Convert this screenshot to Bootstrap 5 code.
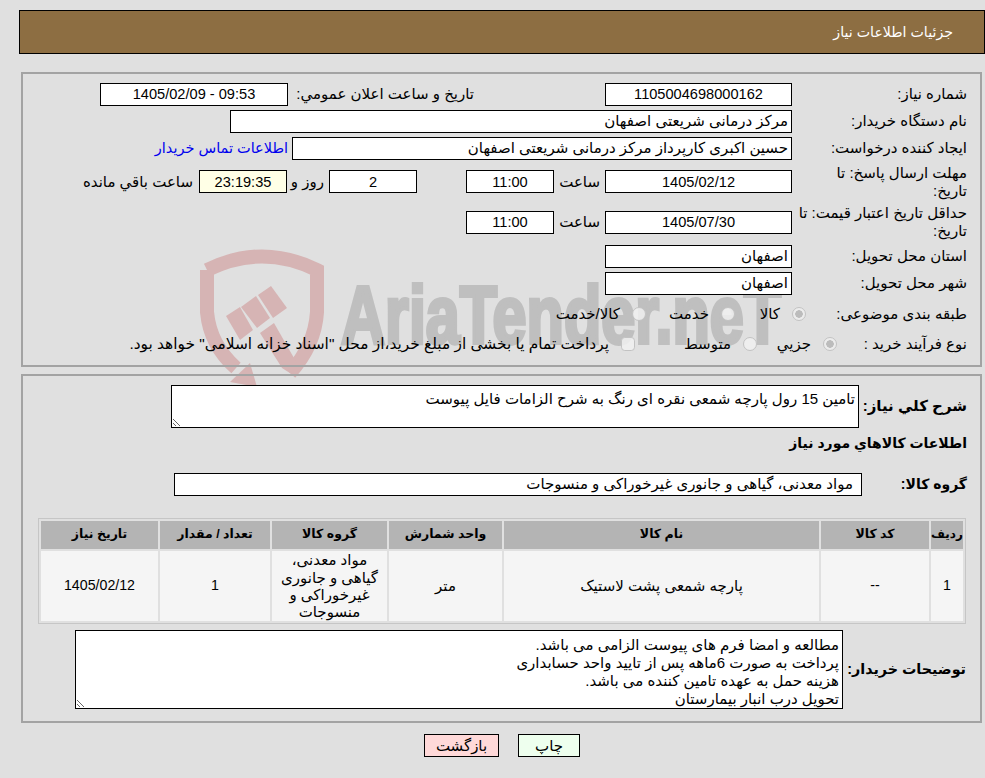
<!DOCTYPE html>
<html lang="fa" dir="rtl">

<head>
    <meta charset="UTF-8">
    <meta name="viewport" content="width=device-width, initial-scale=1.0">
    <title>جزئیات اطلاعات نیاز</title>
    <link href="https://cdn.jsdelivr.net/npm/bootstrap@5.3.0/dist/css/bootstrap.min.css" rel="stylesheet">
    <style>
        html, body { height: 778px; overflow: hidden; }
        body {
            position: relative;
            background-color: #e0e0e0;
            color: #000;
            font-family: "Liberation Sans", "DejaVu Sans", sans-serif;
            font-size: 15px;
            line-height: 18px;
            padding: 9.5px 0 0 0;
        }

        .watermark { position: absolute; left: 190px; top: 240px; width: 620px; height: 160px; z-index: 0; }
        .watermark text { font-family: "Liberation Sans", sans-serif; font-weight: 700; fill: #bfbfbf; stroke: #bfbfbf; stroke-width: 4; }
        .page { position: relative; z-index: 1; }

        .title-bar {
            height: 44px;
            margin-right: 0;
            margin-left: 19px;
            padding-right: 31px;
            background: #8d6e42;
            border: 1px solid #000;
            color: #fff;
            font-size: 14.2px;
        }

        .panel { border: 2px solid #a3a3a3; margin-right: 3px; width: 961px; }
        .panel-top { margin-top: 18px; height: 295px; padding: 7px 13px 0 0; }
        .panel-bottom { margin-top: 7px; height: 349px; padding: 9px 13px 0 0; }

        .frow { display: flex; align-items: center; }
        .h27 { height: 27px; }
        .h40 { height: 40px; }
        .h41 { height: 41px; }
        .h34 { height: 34px; }
        .h26 { height: 26px; }

        .lbl { width: 175px; flex: none; padding-left: 5px; }
        .lbl-wrap { padding-left: 20px; }
        .lbl-subject { width: 161px; padding-left: 0; }
        .lbl-kind { width: 130px; padding-left: 0; }
        .lbl-b { font-weight: 700; font-size: 15px; flex: none; white-space: nowrap; }

        .field {
            flex: none;
            height: 23px;
            padding: 0 3px;
            border: 1px solid #000;
            border-radius: 0;
            background: #fff;
            color: #000;
            font-family: inherit;
            font-size: 15px;
            line-height: 21px;
            text-align: right;
            box-shadow: none;
        }
        .field:focus { outline: 0; box-shadow: none; border-color: #000; }
        .field.num { text-align: center; font-size: 14.6px; }
        .w187 { width: 187px; }
        .w188 { width: 188px; }
        .w88 { width: 88px; }
        .w562 { width: 562px; }
        .w500 { width: 500px; }
        .w688 { width: 688px; }
        .timer { background: #ffffe6; }

        .box-area {
            display: block;
            flex: none;
            border: 1px solid #000;
            border-radius: 0;
            background: #fff;
            color: #000;
            font-family: inherit;
            font-size: 15px;
            line-height: 18px;
            padding: 3px;
            resize: both;
            overflow: hidden;
            text-align: right;
        }
        .box-area:focus { outline: 0; }
        .area-need { width: 688px; height: 43px; padding-top: 4px; }
        .area-notes { width: 768px; height: 79px; padding: 5px 3px 0; }

        .after-date { margin-inline-start: 5px; width: 46px; flex: none; white-space: nowrap; }
        .days-field { margin-inline-start: 49px; }
        .days-label { margin-inline-start: 5px; width: 37px; flex: none; white-space: nowrap; }
        .left-label { margin-inline-start: 6px; flex: none; white-space: nowrap; }
        .pub-label { margin-inline-start: 131px; width: 181px; flex: none; white-space: nowrap; }
        .pub-field { margin-right: 5px; }
        .link-contact { margin-inline-start: 4px; color: #0000ee; font-size: 14.5px; text-decoration: none; white-space: nowrap; }

        .need-label { width: 108px; }
        .goods-title { margin-top: 6px; font-size: 14px; }
        .group-row { margin-top: 21px; }
        .group-label { width: 105px; font-size: 14px; }
        .group-field { padding-right: 8px; }
        .notes-row { margin-top: 5.5px; }
        .notes-label { width: 124px; padding-right: 1px; font-size: 14.3px; }

        .opt { display: flex; align-items: center; flex: none; white-space: nowrap; }
        .subject-1 { width: 71px; }
        .subject-2 { width: 89px; }
        .kind-1 { width: 80px; }
        .kind-2 { width: 122px; }
        .form-check-input.opt-mark {
            width: 14px;
            height: 14px;
            margin: 0;
            float: none;
            flex: none;
            opacity: 1;
            background-color: rgba(240, 240, 240, .85);
            border: 1px solid #c2c2c2;
            box-shadow: none;
        }
        .form-check-input.opt-mark:checked {
            background-image: radial-gradient(circle, #bcbcbc 0 3.5px, #ececec 4px);
            background-color: #ececec;
            border-color: #c2c2c2;
        }
        .opt-text { margin-inline-start: 12px; }
        .kind-3 .opt-text { font-size: 15.4px; }

        .goods-table {
            width: 928px;
            table-layout: fixed;
            border-collapse: separate;
            border-spacing: 2px;
            border: 1px solid #c6c6c6;
            margin: 22.5px 1px 0 0;
            direction: rtl;
        }
        .goods-table > * > tr > * {
            padding: 0;
            border: 0;
            text-align: center;
            vertical-align: middle;
            color: #000;
            line-height: 17.3px;
            box-shadow: none;
        }
        .goods-table > thead > tr > th { height: 28px; background: #b4b4b4; font-size: 12.5px; }
        .goods-table > thead > tr > th.th-row { font-size: 12px; }
        .goods-table > tbody > tr > td { height: 70px; background: #f5f5f5; }
        .goods-table > tbody > tr > td.num-cell { font-size: 14.2px; }

        .btn-plain {
            height: 23px;
            padding: 0;
            border: 1px solid #000;
            border-radius: 0;
            color: #000;
            font-size: 15px;
            line-height: 21px;
        }
        .btn-plain:hover { color: #000; border-color: #000; }
        .btn-print { width: 62px; background: #eeffee; }
        .btn-print:hover { background: #eeffee; }
        .btn-back { width: 75px; background: #ffd9d9; }
        .btn-back:hover { background: #ffd9d9; }
        .btn-row { margin-top: 11px; gap: 19px; padding-right: 405px; }
    </style>
</head>

<body>
    <svg class="watermark" viewBox="0 0 620 160" xmlns="http://www.w3.org/2000/svg" aria-hidden="true">
        <!-- shield and gavel -->
        <path d="M17 30 Q72 3 127 30 V72 Q125 105 100 133" fill="none" stroke="#d6b4b4" stroke-width="14"/>
        <path d="M17 30 V72 Q20 105 46 128" fill="none" stroke="#d6b4b4" stroke-width="14"/>
        <g fill="#d6b4b4">
            <polygon points="40,142 60,123 67,147"/>
            <polygon points="36,76 50,67 63,90 50,100"/>
            <polygon points="51,67 66,56 80,78 67,88"/>
            <polygon points="68,55 81,46 97,68 83,78"/>
            <polygon points="70,93 84,83 108,125 103,135 92,128"/>
        </g>
        <text transform="translate(151 103) scale(.745 1)" font-size="82" direction="ltr" unicode-bidi="bidi-override">AriaTender.neT</text>
    </svg>

    <div class="page">
        <div class="title-bar d-flex align-items-center">جزئیات اطلاعات نیاز</div>

        <div class="panel panel-top">
            <div class="frow h27">
                <div class="lbl">شماره نیاز:</div>
                <input class="field num w187" readonly value="1105004698000162">
                <div class="pub-label">تاریخ و ساعت اعلان عمومي:</div>
                <input class="field num w188 pub-field" readonly dir="ltr" value="1405/02/09 - 09:53">
            </div>
            <div class="frow h27">
                <div class="lbl">نام دستگاه خریدار:</div>
                <input class="field w562" readonly value="مرکز درمانی شریعتی اصفهان">
            </div>
            <div class="frow h27">
                <div class="lbl">ایجاد کننده درخواست:</div>
                <input class="field w500" readonly value="حسین اکبری کارپرداز مرکز درمانی شریعتی اصفهان">
                <a class="link-contact" href="#">اطلاعات تماس خریدار</a>
            </div>
            <div class="frow h40">
                <div class="lbl lbl-wrap">مهلت ارسال پاسخ: تا تاریخ:</div>
                <input class="field num w187" readonly value="1405/02/12">
                <div class="after-date">ساعت</div>
                <input class="field num w88" readonly value="11:00">
                <input class="field num w88 days-field" readonly value="2">
                <div class="days-label">روز و</div>
                <input class="field num w88 timer" readonly value="23:19:35">
                <div class="left-label">ساعت باقي مانده</div>
            </div>
            <div class="frow h41">
                <div class="lbl">حداقل تاریخ اعتبار قیمت: تا تاریخ:</div>
                <input class="field num w187" readonly value="1405/07/30">
                <div class="after-date">ساعت</div>
                <input class="field num w88" readonly value="11:00">
            </div>
            <div class="frow h27">
                <div class="lbl">استان محل تحویل:</div>
                <input class="field w187" readonly value="اصفهان">
            </div>
            <div class="frow h27">
                <div class="lbl">شهر محل تحویل:</div>
                <input class="field w187" readonly value="اصفهان">
            </div>
            <div class="frow h34">
                <div class="lbl lbl-subject">طبقه بندی موضوعی:</div>
                <div class="opt subject-1"><input class="form-check-input opt-mark" type="radio" name="subject" checked disabled><span class="opt-text">کالا</span></div>
                <div class="opt subject-2"><input class="form-check-input opt-mark" type="radio" name="subject" disabled><span class="opt-text">خدمت</span></div>
                <div class="opt subject-3"><input class="form-check-input opt-mark" type="radio" name="subject" disabled><span class="opt-text">کالا/خدمت</span></div>
            </div>
            <div class="frow h26">
                <div class="lbl lbl-kind">نوع فرآیند خرید :</div>
                <div class="opt kind-1"><input class="form-check-input opt-mark" type="radio" name="kind" checked disabled><span class="opt-text">جزيي</span></div>
                <div class="opt kind-2"><input class="form-check-input opt-mark" type="radio" name="kind" disabled><span class="opt-text">متوسط</span></div>
                <div class="opt kind-3"><input class="form-check-input opt-mark" type="checkbox" disabled><span class="opt-text">پرداخت تمام یا بخشی از مبلغ خرید،از محل "اسناد خزانه اسلامی" خواهد بود.</span></div>
            </div>
        </div>

        <div class="panel panel-bottom">
            <div class="d-flex align-items-center">
                <div class="lbl-b need-label">شرح کلي نیاز:</div>
                <textarea class="box-area area-need" readonly>تامین 15 رول پارچه شمعی نقره ای رنگ به شرح الزامات فایل پیوست</textarea>
            </div>
            <div class="lbl-b goods-title">اطلاعات کالاهاي مورد نیاز</div>
            <div class="frow group-row">
                <div class="lbl-b group-label">گروه کالا:</div>
                <input class="field w688 group-field" readonly value="مواد معدنی، گیاهی و جانوری غیرخوراکی و منسوجات">
            </div>
            <table class="table goods-table">
                <colgroup>
                    <col style="width:32px"><col style="width:108px"><col style="width:315px"><col style="width:113px"><col style="width:115px"><col style="width:110px"><col style="width:117px">
                </colgroup>
                <thead>
                    <tr>
                        <th class="th-row">ردیف</th>
                        <th>کد کالا</th>
                        <th>نام کالا</th>
                        <th>واحد شمارش</th>
                        <th>گروه کالا</th>
                        <th>تعداد / مقدار</th>
                        <th>تاریخ نیاز</th>
                    </tr>
                </thead>
                <tbody>
                    <tr>
                        <td class="num-cell">1</td>
                        <td class="num-cell">--</td>
                        <td>پارچه شمعی پشت لاستیک</td>
                        <td>متر</td>
                        <td>مواد معدنی، گیاهی و جانوری غیرخوراکی و منسوجات</td>
                        <td class="num-cell">1</td>
                        <td class="num-cell">1405/02/12</td>
                    </tr>
                </tbody>
            </table>
            <div class="d-flex align-items-center notes-row">
                <div class="lbl-b notes-label">توضیحات خریدار:</div>
                <textarea class="box-area area-notes" readonly>مطالعه و امضا فرم های پیوست الزامی می باشد.
پرداخت به صورت 6ماهه پس از تایید واحد حسابداری
هزینه حمل به عهده تامین کننده می باشد.
تحویل درب انبار بیمارستان</textarea>
            </div>
        </div>

        <div class="d-flex btn-row">
            <button type="button" class="btn btn-plain btn-print">چاپ</button>
            <button type="button" class="btn btn-plain btn-back">بازگشت</button>
        </div>
    </div>
</body>

</html>
